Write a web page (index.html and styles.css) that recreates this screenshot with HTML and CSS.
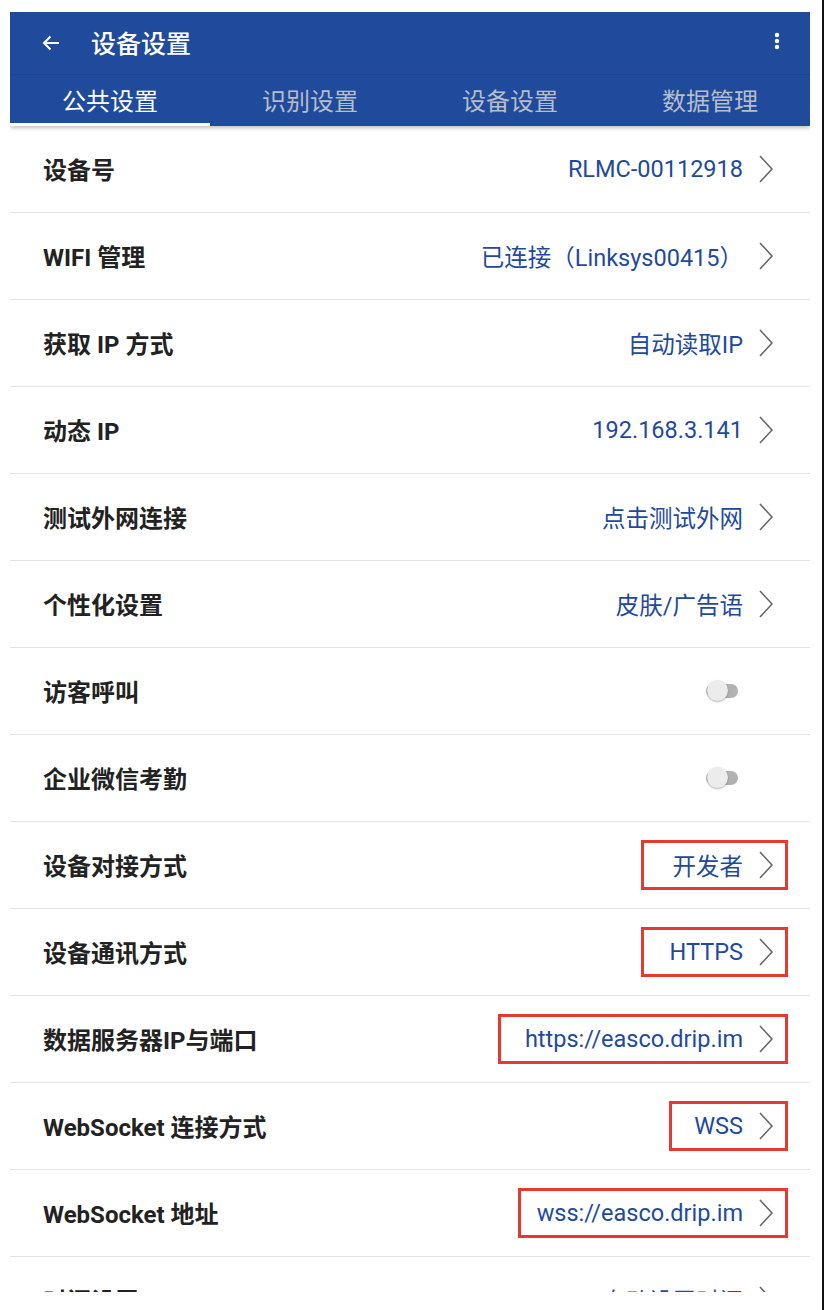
FILE: index.html
```html
<!DOCTYPE html>
<html lang="zh-CN">
<head>
    <meta charset="UTF-8">
    <meta name="viewport" content="width=device-width, initial-scale=1.0">
    <title>设备设置</title>
    <link rel="stylesheet" href="styles.css">
</head>
<body>
    <div class="frame">
        <div class="screen">
            <header class="app-bar">
                <div class="title-bar">
                    <svg class="back" width="18" height="16" viewBox="0 0 18 16">
                        <path d="M17 8H2M8.5 1.5L2 8l6.5 6.5" fill="none" stroke="#fff" stroke-width="2"/>
                    </svg>
                    <h1>设备设置</h1>
                    <svg class="more" width="6" height="18" viewBox="0 0 6 18">
                        <circle cx="3" cy="3" r="2.2" fill="#fff"/>
                        <circle cx="3" cy="9" r="2.2" fill="#fff"/>
                        <circle cx="3" cy="15" r="2.2" fill="#fff"/>
                    </svg>
                </div>
                <nav class="tabs">
                    <div class="tab active">公共设置</div>
                    <div class="tab">识别设置</div>
                    <div class="tab">设备设置</div>
                    <div class="tab">数据管理</div>
                </nav>
            </header>

            <ul class="settings">
                <li class="row">
                    <span class="label">设备号</span>
                    <span class="value">RLMC-00112918<svg class="chev" viewBox="0 0 14 28"><path d="M1 1l12 13L1 27"/></svg></span>
                </li>
                <li class="row">
                    <span class="label">WIFI 管理</span>
                    <span class="value">已连接（Linksys00415）<svg class="chev" viewBox="0 0 14 28"><path d="M1 1l12 13L1 27"/></svg></span>
                </li>
                <li class="row">
                    <span class="label">获取 IP 方式</span>
                    <span class="value">自动读取IP<svg class="chev" viewBox="0 0 14 28"><path d="M1 1l12 13L1 27"/></svg></span>
                </li>
                <li class="row">
                    <span class="label">动态 IP</span>
                    <span class="value">192.168.3.141<svg class="chev" viewBox="0 0 14 28"><path d="M1 1l12 13L1 27"/></svg></span>
                </li>
                <li class="row">
                    <span class="label">测试外网连接</span>
                    <span class="value">点击测试外网<svg class="chev" viewBox="0 0 14 28"><path d="M1 1l12 13L1 27"/></svg></span>
                </li>
                <li class="row">
                    <span class="label">个性化设置</span>
                    <span class="value">皮肤/广告语<svg class="chev" viewBox="0 0 14 28"><path d="M1 1l12 13L1 27"/></svg></span>
                </li>
                <li class="row">
                    <span class="label">访客呼叫</span>
                    <span class="switch"><span class="thumb"></span></span>
                </li>
                <li class="row">
                    <span class="label">企业微信考勤</span>
                    <span class="switch"><span class="thumb"></span></span>
                </li>
                <li class="row">
                    <span class="label">设备对接方式</span>
                    <span class="value">开发者<svg class="chev" viewBox="0 0 14 28"><path d="M1 1l12 13L1 27"/></svg><span class="mark" style="width: 147px"></span></span>
                </li>
                <li class="row">
                    <span class="label">设备通讯方式</span>
                    <span class="value">HTTPS<svg class="chev" viewBox="0 0 14 28"><path d="M1 1l12 13L1 27"/></svg><span class="mark" style="width: 147px"></span></span>
                </li>
                <li class="row">
                    <span class="label">数据服务器IP与端口</span>
                    <span class="value">https://easco.drip.im<svg class="chev" viewBox="0 0 14 28"><path d="M1 1l12 13L1 27"/></svg><span class="mark" style="width: 290px"></span></span>
                </li>
                <li class="row">
                    <span class="label">WebSocket 连接方式</span>
                    <span class="value">WSS<svg class="chev" viewBox="0 0 14 28"><path d="M1 1l12 13L1 27"/></svg><span class="mark" style="width: 119px"></span></span>
                </li>
                <li class="row">
                    <span class="label">WebSocket 地址</span>
                    <span class="value">wss://easco.drip.im<svg class="chev" viewBox="0 0 14 28"><path d="M1 1l12 13L1 27"/></svg><span class="mark" style="width: 270px"></span></span>
                </li>
                <li class="row">
                    <span class="label">时间设置</span>
                    <span class="value">自动设置时间<svg class="chev" viewBox="0 0 14 28"><path d="M1 1l12 13L1 27"/></svg></span>
                </li>
            </ul>
        </div>
    </div>
</body>
</html>
```

FILE: styles.css
```css
html, body {
    margin: 0;
    padding: 0;
    background: #fff;
}
body {
    font-family: Roboto, "Noto Sans CJK SC", sans-serif;
    color: #222;
}
.frame {
    width: 824px;
    height: 1310px;
    border-right: 2px solid #111;
    padding-top: 12px;
    box-sizing: border-box;
}
.screen {
    margin-left: 10px;
    width: 800px;
    height: 1280px;
    overflow: hidden;
    background: #fff;
}
.app-bar {
    background: #204a9c;
    box-shadow: 0 2px 4px rgba(0,0,0,0.25);
    position: relative;
    z-index: 1;
}
.title-bar {
    height: 62px;
    display: flex;
    align-items: center;
    padding: 0 30px 0 32px;
    border-bottom: 1px solid #1c4390;
}
.back {
    margin-right: 31px;
}
.title-bar h1 {
    flex: 1;
    margin: 0;
    color: #fff;
    font-size: 25px;
    font-weight: 500;
    padding-bottom: 2px;
}
.more {
    margin-top: -4px;
}
.tabs {
    display: flex;
    height: 51px;
}
.tab {
    flex: 1;
    display: flex;
    align-items: center;
    justify-content: center;
    font-size: 24px;
    color: #b7bdc9;
    border-bottom: 3px solid transparent;
    padding-top: 1px;
}
.tab.active {
    color: #fff;
    border-bottom-color: #fff;
}
.settings {
    list-style: none;
    margin: 0;
    padding: 0;
}
.row {
    height: 86px;
    border-bottom: 1px solid #e3e3e3;
    display: flex;
    align-items: center;
    justify-content: space-between;
    padding: 0 37px 0 33px;
}
.label {
    font-size: 24px;
    font-weight: 700;
    color: #222;
    padding-bottom: 2px;
}
.value {
    position: relative;
    display: flex;
    align-items: center;
    font-size: 23.5px;
    color: #1f4a9c;
}
.chev {
    width: 14px;
    height: 28px;
    margin-left: 16px;
    fill: none;
    stroke: #666;
    stroke-width: 1.6;
}
.mark {
    position: absolute;
    right: -15px;
    top: 50%;
    height: 50px;
    margin-top: -25px;
    border: 3px solid #e53a2f;
    box-sizing: border-box;
}
.switch {
    position: relative;
    width: 32px;
    height: 14px;
    margin-right: 35px;
    border-radius: 7px;
    background: #b2b2b2;
}
.thumb {
    position: absolute;
    left: 1px;
    top: -4px;
    width: 21px;
    height: 21px;
    border-radius: 50%;
    background: #ececec;
    box-shadow: 0 1px 2px rgba(0,0,0,0.3);
}
```
